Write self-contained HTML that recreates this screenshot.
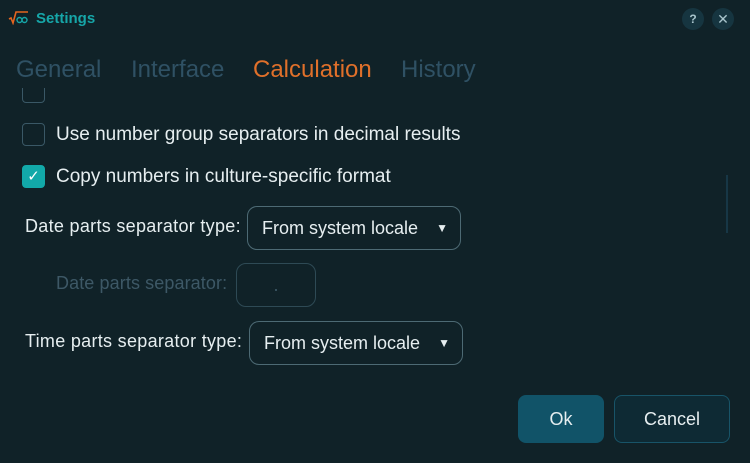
<!DOCTYPE html>
<html><head><style>
body{margin:0;width:750px;height:463px;background:#102228;font-family:"Liberation Sans",sans-serif;position:relative;overflow:hidden;color:#e6eef0}
.a{position:absolute}
.tab{position:absolute;top:56px;font-size:24px;color:#2f5164;white-space:nowrap}
.cb{position:absolute;left:22px;width:21px;height:21px;border:1.5px solid #3a5866;border-radius:4px}
.lbl{position:absolute;font-size:19px;white-space:nowrap;line-height:20px;letter-spacing:0px}
.dd{position:absolute;border:1px solid #4d6a74;border-radius:10px;box-sizing:border-box;font-size:18px;line-height:42px;padding-left:14px}
.dd span{position:absolute;right:12px;top:0;font-size:12px}
.circ{position:absolute;width:22px;height:22px;border-radius:50%;background:#163540;color:#a8c4cc;font-size:12px;text-align:center;line-height:22px;font-weight:bold}
</style></head><body>
<svg class="a" style="left:8px;top:11px" width="22" height="14" viewBox="0 0 22 14"><path d="M1 8 L3 7 L5 12 L8 1 L20 1" fill="none" stroke="#e4651f" stroke-width="1.6"/><g fill="none" stroke="#16a6a8" stroke-width="1.4"><circle cx="11.5" cy="9" r="2.5"/><circle cx="16.5" cy="9" r="2.5"/></g></svg>
<div class="a" style="left:36px;top:10px;font-size:15px;font-weight:bold;color:#16a6a8">Settings</div>
<div class="circ" style="left:682px;top:8px">?</div>
<div class="circ" style="left:712px;top:8px;font-weight:normal;font-size:14px">✕</div>
<div class="tab" style="left:16px">General</div>
<div class="tab" style="left:131px">Interface</div>
<div class="tab" style="left:253px;color:#e0702a">Calculation</div>
<div class="tab" style="left:401px">History</div>
<div class="a" style="left:22px;top:88px;width:24px;height:16px;overflow:hidden"><div style="position:absolute;top:-8px;width:21px;height:21px;border:1.5px solid #3a5866;border-radius:4px"></div></div>
<div class="cb" style="top:123px"></div>
<div class="lbl" style="left:56px;top:125px">Use number group separators in decimal results</div>
<div class="cb" style="top:165px;background:#12a9a9;border-color:#12a9a9;color:#fff;text-align:center;line-height:21px;font-size:15px">✓</div>
<div class="lbl" style="left:56px;top:167px">Copy numbers in culture-specific format</div>
<div class="lbl" style="left:25px;top:216px;font-size:18px;letter-spacing:0.3px">Date parts separator type:</div>
<div class="dd" style="left:247px;top:206px;width:214px;height:44px">From system locale<span>▼</span></div>
<div class="lbl" style="left:56px;top:273px;font-size:18px;letter-spacing:0.1px;color:#3d5866">Date parts separator:</div>
<div class="dd" style="left:236px;top:263px;width:80px;height:44px;border-color:#2e4a55;color:#3d5866;padding:0;text-align:center">.</div>
<div class="lbl" style="left:25px;top:331px;font-size:18px;letter-spacing:0.3px">Time parts separator type:</div>
<div class="dd" style="left:249px;top:321px;width:214px;height:44px">From system locale<span>▼</span></div>
<div class="a" style="left:726px;top:175px;width:2px;height:58px;background:#173746"></div>
<div class="a" style="left:518px;top:395px;width:86px;height:48px;background:#115368;border-radius:8px;font-size:18px;text-align:center;line-height:48px">Ok</div>
<div class="a" style="left:614px;top:395px;width:116px;height:48px;box-sizing:border-box;background:#0e2a34;border:1px solid #185468;border-radius:8px;font-size:18px;text-align:center;line-height:46px">Cancel</div>
</body></html>
